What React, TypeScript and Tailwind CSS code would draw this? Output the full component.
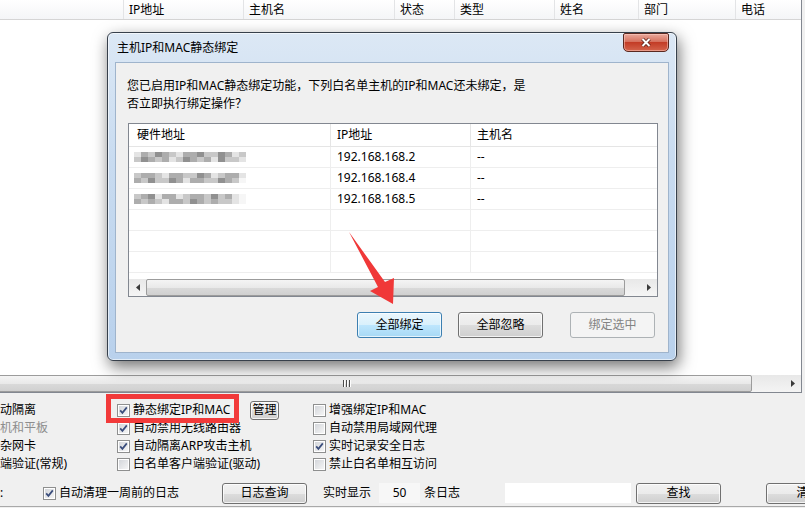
import React from "react";

const font = "font-['Noto_Sans','Noto_Sans_CJK_SC',sans-serif]";

const btn =
  "flex shrink-0 items-center justify-center rounded-[3px] border border-[#707070] bg-[linear-gradient(#f2f2f2,#ebebeb_50%,#dddddd_50%,#cfcfcf)] shadow-[inset_0_0_0_1px_rgba(255,255,255,0.75)] text-[12px] text-black";

const shade: Record<string, string> = {
  a: "bg-[#e4e4e4]",
  b: "bg-[#c8c8c8]",
  c: "bg-[#adadad]",
  d: "bg-[#909090]",
  e: "bg-[#f6f6f6]",
};

const mosaics = [
  ["acbdcbaccdbbdcab", "bdcbcabdcbcadbba"],
  ["bccbaccbbdcabcca", "cbdbbdcaccbbdcbe"],
  ["bcdaccabccbdbcae", "cbcbaccbdcbcbbae"],
];

const rows = [
  { ip: "192.168.168.2", host: "--" },
  { ip: "192.168.168.4", host: "--" },
  { ip: "192.168.168.5", host: "--" },
  null,
  null,
  null,
];

const mainCols = [
  { w: "w-[124px]", t: "" },
  { w: "w-[120px]", t: "IP地址" },
  { w: "w-[151px]", t: "主机名" },
  { w: "w-[60px]", t: "状态" },
  { w: "w-[100px]", t: "类型" },
  { w: "w-[84px]", t: "姓名" },
  { w: "w-[97px]", t: "部门" },
  { w: "w-[80px]", t: "电话" },
];

const Check = ({ on = false }: { on?: boolean }) => (
  <span className="relative block h-[13px] w-[13px] shrink-0 border border-[#8e8f8f] bg-[linear-gradient(135deg,#d0d3d8,#f8f8f8)] shadow-[inset_0_0_0_1px_#ffffff]">
    {on && (
      <svg className="absolute left-0 top-0" width="11" height="11" viewBox="0 0 11 11">
        <path d="M2.2 5.4 L4.4 7.9 L8.8 2.4" fill="none" stroke="#3a4d7c" strokeWidth="1.7" />
      </svg>
    )}
  </span>
);

const Opt = ({ on, label, dim }: { on?: boolean; label: string; dim?: boolean }) => (
  <div className="flex shrink-0 items-center gap-[3px]">
    <Check on={on} />
    <span className={dim ? "text-[#8d8d8d]" : ""}>{label}</span>
  </div>
);

const Tri = ({ dir }: { dir: "l" | "r" }) => (
  <svg width="4" height="7" viewBox="0 0 4 7">
    <path d={dir === "l" ? "M4 0 L0 3.5 L4 7Z" : "M0 0 L4 3.5 L0 7Z"} fill="#3a3a3a" />
  </svg>
);

const Grip = () => (
  <div className="flex gap-[2px]">
    {[0, 1, 2].map((i) => (
      <span key={i} className="h-[7px] w-px bg-[#4d4d4d] shadow-[1px_0_0_#ffffff]" />
    ))}
  </div>
);

const Mosaic = ({ rows }: { rows: string[] }) => (
  <div className="flex flex-col blur-[0.4px]">
    {rows.map((r, i) => (
      <div key={i} className="flex">
        {r.split("").map((k, j) => (
          <span key={j} className={`h-[5px] w-[7px] ${shade[k]}`} />
        ))}
      </div>
    ))}
  </div>
);

const Dialog = () => (
  <div className="absolute left-[107px] top-[32px] flex h-[329px] w-[570px] flex-col rounded-[6px] border border-[#37404b] bg-[linear-gradient(180deg,#dce8f5,#c8dbf0_40%,#b9d1ec)] px-[7px] pb-[7px] shadow-[2px_6px_16px_rgba(0,0,0,0.55),inset_0_0_0_1px_rgba(255,255,255,0.6)]">
    {/* title bar */}
    <div className="flex h-[29px] shrink-0 items-start justify-between">
      <span className="mt-[6px] pl-[2px]">主机IP和MAC静态绑定</span>
      <div className="flex h-[19px] w-[46px] items-center justify-center rounded-b-[5px] rounded-t-[2px] border border-[#5a2820] bg-[linear-gradient(#eaa99c,#d6715e_45%,#c33c26_50%,#d4644c)] shadow-[inset_0_0_0_1px_rgba(255,210,200,0.5)]">
        <svg width="12" height="11" viewBox="0 0 12 11">
          <path d="M2.5 2 L9.5 9 M9.5 2 L2.5 9" stroke="#5b2018" strokeWidth="3.6" />
          <path d="M2.5 2 L9.5 9 M9.5 2 L2.5 9" stroke="#ffffff" strokeWidth="2" />
        </svg>
      </div>
    </div>

    {/* client */}
    <div className="flex flex-1 flex-col border border-[#9fb4cc] bg-[#f0f0f0] pl-[11px] pt-[14px]">
      <p className="whitespace-nowrap leading-[18px]">
        您已启用IP和MAC静态绑定功能，下列白名单主机的IP和MAC还未绑定，是
        <br />
        否立即执行绑定操作？
      </p>

      <div className="ml-px mt-[10px] flex h-[174px] w-[530px] flex-col border border-[#828790] bg-white">
        <div className="flex h-[23px] shrink-0 border-b border-[#e5e5e5]">
          <div className="flex w-[202px] items-center border-r border-[#e5e5e5] pl-[8px]">硬件地址</div>
          <div className="flex w-[140px] items-center border-r border-[#e5e5e5] pl-[6px]">IP地址</div>
          <div className="flex flex-1 items-center pl-[6px]">主机名</div>
        </div>
        <div className="flex-1 overflow-hidden">
          {rows.map((r, i) => (
            <div key={i} className="flex h-[21px] border-b border-[#eeeeee]">
              <div className="flex w-[202px] items-center border-r border-[#eeeeee] pl-[5px]">
                {r && <Mosaic rows={mosaics[i]} />}
              </div>
              <div className="flex w-[140px] items-center border-r border-[#eeeeee] pl-[6px]">{r?.ip}</div>
              <div className="flex flex-1 items-center pl-[6px]">{r?.host}</div>
            </div>
          ))}
        </div>
        <div className="flex h-[17px] shrink-0 bg-[linear-gradient(#e8e8e8,#f5f5f5)]">
          <div className="flex w-[17px] items-center justify-center">
            <Tri dir="l" />
          </div>
          <div className="w-[479px] rounded-[2px] border border-[#9c9c9c] bg-[linear-gradient(#f4f4f4,#e9e9e9_50%,#dadada_50%,#d0d0d0)]" />
          <div className="flex-1" />
          <div className="flex w-[17px] items-center justify-center">
            <Tri dir="r" />
          </div>
        </div>
      </div>

      <div className="mt-[15px] flex">
        <div className="ml-[230px] flex h-[26px] w-[85px] items-center justify-center rounded-[3px] border border-[#3c7fb1] bg-[linear-gradient(#eaf6fd,#d9f0fc_50%,#bee6fd_50%,#a7d9f5)] shadow-[inset_0_0_0_1px_rgba(255,255,255,0.7)]">
          全部绑定
        </div>
        <div className={`${btn} ml-[16px] h-[26px] w-[85px]`}>全部忽略</div>
        <div className="ml-[27px] flex h-[26px] w-[85px] items-center justify-center rounded-[3px] border border-[#adb2b5] bg-[#f4f4f4] text-[#838383]">
          绑定选中
        </div>
      </div>
    </div>
  </div>
);

export default function App() {
  return (
    <div className={`relative h-[508px] w-[805px] overflow-hidden bg-[#f0f0f0] text-[12px] leading-[18px] text-black ${font}`}>
      {/* main list */}
      <div className="flex h-[393px] w-[802px] flex-col border-b border-r border-[#828790] bg-white">
        <div className="flex h-[20px] shrink-0 border-b border-[#d5d5d5] bg-[linear-gradient(#ffffff,#f4f5f7)]">
          {mainCols.map((c, i) => (
            <div key={i} className={`${c.w} flex shrink-0 items-center border-r border-[#e3e4e6] pl-[5px]`}>
              {c.t}
            </div>
          ))}
        </div>
        <div className="flex-1" />
        <div className="flex h-[17px] shrink-0 bg-[linear-gradient(#e8e8e8,#f4f4f4)]">
          <div className="-ml-[60px] flex w-[812px] shrink-0 items-center justify-center rounded-[2px] border border-[#9c9c9c] bg-[linear-gradient(#f4f4f4,#e9e9e9_50%,#dadada_50%,#d0d0d0)]">
            <Grip />
          </div>
          <div className="flex-1" />
          <div className="flex w-[17px] items-center justify-center">
            <Tri dir="r" />
          </div>
        </div>
      </div>

      {/* options */}
      <div className="flex flex-col pt-[8px]">
        <div className="flex h-[18px] items-center">
          <div className="w-[117px] shrink-0">动隔离</div>
          <div className="flex w-[196px] shrink-0 items-center">
            <div className="w-[133px] shrink-0">
              <Opt on label="静态绑定IP和MAC" />
            </div>
            <div className={`${btn} h-[19px] w-[29px]`}>管理</div>
          </div>
          <Opt label="增强绑定IP和MAC" />
        </div>
        <div className="flex h-[18px] items-center">
          <div className="w-[117px] shrink-0 text-[#8d8d8d]">机和平板</div>
          <div className="w-[196px] shrink-0">
            <Opt on label="自动禁用无线路由器" />
          </div>
          <Opt label="自动禁用局域网代理" />
        </div>
        <div className="flex h-[18px] items-center">
          <div className="w-[117px] shrink-0">杂网卡</div>
          <div className="w-[196px] shrink-0">
            <Opt on label="自动隔离ARP攻击主机" />
          </div>
          <Opt on label="实时记录安全日志" />
        </div>
        <div className="flex h-[18px] items-center">
          <div className="w-[117px] shrink-0">端验证(常规)</div>
          <div className="w-[196px] shrink-0">
            <Opt label="白名单客户端验证(驱动)" />
          </div>
          <Opt label="禁止白名单相互访问" />
        </div>
      </div>

      {/* bottom bar */}
      <div className="mt-[9px] flex h-[22px] items-center">
        <span className="w-[43px] shrink-0">:</span>
        <div className="w-[179px] shrink-0">
          <Opt on label="自动清理一周前的日志" />
        </div>
        <div className={`${btn} h-[21px] w-[85px]`}>日志查询</div>
        <span className="ml-[16px] shrink-0">实时显示</span>
        <div className="ml-[8px] flex h-[20px] w-[41px] shrink-0 items-center justify-center bg-[#f7f7f7]">50</div>
        <span className="ml-[4px] shrink-0">条日志</span>
        <div className="ml-[45px] h-[20px] w-[126px] shrink-0 bg-white" />
        <div className={`${btn} ml-[5px] h-[21px] w-[85px]`}>查找</div>
        <div className={`${btn} ml-[45px] h-[21px] w-[85px]`}>清空</div>
      </div>
      <div className="mt-[2px] h-px bg-[#a9a9a9]" />

      <Dialog />

      {/* annotations */}
      <div className="absolute left-[106px] top-[394px] h-[29px] w-[133px] border-[5px] border-[#f23a3a]" />
      <svg className="pointer-events-none absolute left-0 top-0" width="805" height="508" viewBox="0 0 805 508">
        <polygon points="349,232 385,282 394,278 393,304 370,291 378,287" fill="#f03838" />
      </svg>
    </div>
  );
}
